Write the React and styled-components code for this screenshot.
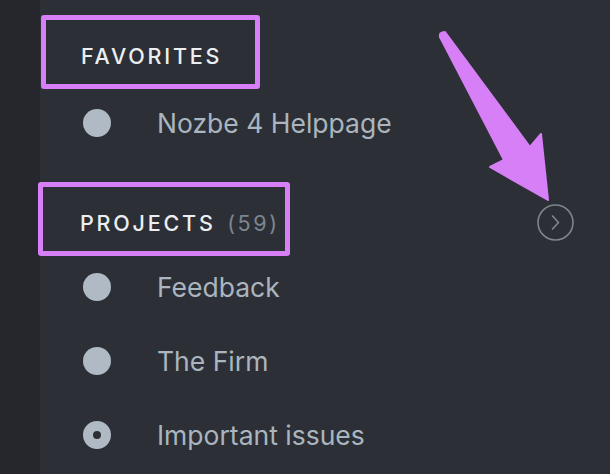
import React from "react";
import styled, { createGlobalStyle } from "styled-components";

const GlobalStyle = createGlobalStyle`
    html, body {
        margin: 0;
        padding: 0;
        background: #2c3036;
    }
    body {
        font-family: Inter, "Noto Sans", "Liberation Sans", sans-serif;
        -webkit-font-smoothing: antialiased;
    }
`;

const favorites = [{ name: "Nozbe 4 Helppage", kind: "full" }];

const projects = [
    { name: "Feedback", kind: "full" },
    { name: "The Firm", kind: "full" },
    { name: "Important issues", kind: "ring" },
];

const Arrow = () => (
    <ArrowSvg width="610" height="474" viewBox="0 0 610 474">
        <path
            d="M440 37 Q439 32 445 32 L530 147 L541 134 L548 200 L490 167 L504 160 Z"
            fill="#d67ff6"
            stroke="#d67ff6"
            strokeWidth="2"
            strokeLinejoin="round"
        />
    </ArrowSvg>
);

const App = () => {
    return (
        <>
            <GlobalStyle />
            <Page>
                <Strip />
                <Main>
                    <HeaderRow>
                        <HeaderBox $left={1} $width={219} $pad={35}>
                            <Title>FAVORITES</Title>
                        </HeaderBox>
                    </HeaderRow>
                    {favorites.map(item => (
                        <Item key={item.name}>
                            <Dot $kind={item.kind} />
                            <Name>{item.name}</Name>
                        </Item>
                    ))}
                    <HeaderRow $top={22} $bottom={-6}>
                        <HeaderBox $left={-2} $width={252} $pad={37}>
                            <Title>
                                PROJECTS <Count>(59)</Count>
                            </Title>
                        </HeaderBox>
                        <MoreButton>
                            <svg width="37" height="37" viewBox="0 0 37 37">
                                <circle cx="18.5" cy="18.5" r="17.5" fill="none" stroke="#7d858d" strokeWidth="1.6" />
                                <path d="M15.5 12 L21.5 18.5 L15.5 25" fill="none" stroke="#7d858d" strokeWidth="1.7" strokeLinecap="round" strokeLinejoin="round" />
                            </svg>
                        </MoreButton>
                    </HeaderRow>
                    {projects.map(item => (
                        <Item key={item.name}>
                            <Dot $kind={item.kind} />
                            <Name>{item.name}</Name>
                        </Item>
                    ))}
                </Main>
                <Arrow />
            </Page>
        </>
    );
};

export default App;

const Page = styled.div`
    position: relative;
    display: flex;
    width: 610px;
    height: 474px;
    overflow: hidden;
    background: #2c3036;
`;

const Strip = styled.div`
    width: 40px;
    flex-shrink: 0;
    background: #25272c;
`;

const Main = styled.div`
    flex: 1;
    display: flex;
    flex-direction: column;
    padding-top: 15px;
    padding-right: 36px;
`;

const HeaderRow = styled.div`
    display: flex;
    align-items: center;
    justify-content: space-between;
    margin-top: ${({ $top }) => $top || 0}px;
    margin-bottom: ${({ $bottom }) => $bottom ?? -3}px;
`;

const HeaderBox = styled.div`
    box-sizing: border-box;
    height: 74px;
    width: ${({ $width }) => $width}px;
    margin-left: ${({ $left }) => $left}px;
    padding: 7px 0 0 ${({ $pad }) => $pad}px;
    display: flex;
    align-items: center;
    border: 5px solid #d67ff6;
    border-radius: 3px;
`;

const Title = styled.div`
    font-size: 21.5px;
    font-weight: 500;
    letter-spacing: 2.8px;
    color: #eceff2;
    white-space: nowrap;
`;

const Count = styled.span`
    color: #7d858e;
    letter-spacing: 2.6px;
    font-weight: 400;
    margin-left: 3px;
`;

const MoreButton = styled.div`
    width: 37px;
    height: 37px;
    margin-top: 6px;
    display: flex;
    svg {
        display: block;
    }
`;

const Item = styled.div`
    height: 74px;
    display: flex;
    align-items: center;
    padding-left: 43px;
    gap: 46px;
`;

const Dot = styled.span`
    box-sizing: border-box;
    width: 28px;
    height: 28px;
    flex-shrink: 0;
    border-radius: 50%;
    background: ${({ $kind }) => ($kind === "ring" ? "#2c3036" : "#afbac4")};
    border: ${({ $kind }) => ($kind === "ring" ? "10px solid #afbac4" : "none")};
`;

const Name = styled.span`
    font-size: 26.5px;
    color: #aab5bf;
    white-space: nowrap;
`;

const ArrowSvg = styled.svg`
    position: absolute;
    top: 0;
    left: 0;
    pointer-events: none;
`;
